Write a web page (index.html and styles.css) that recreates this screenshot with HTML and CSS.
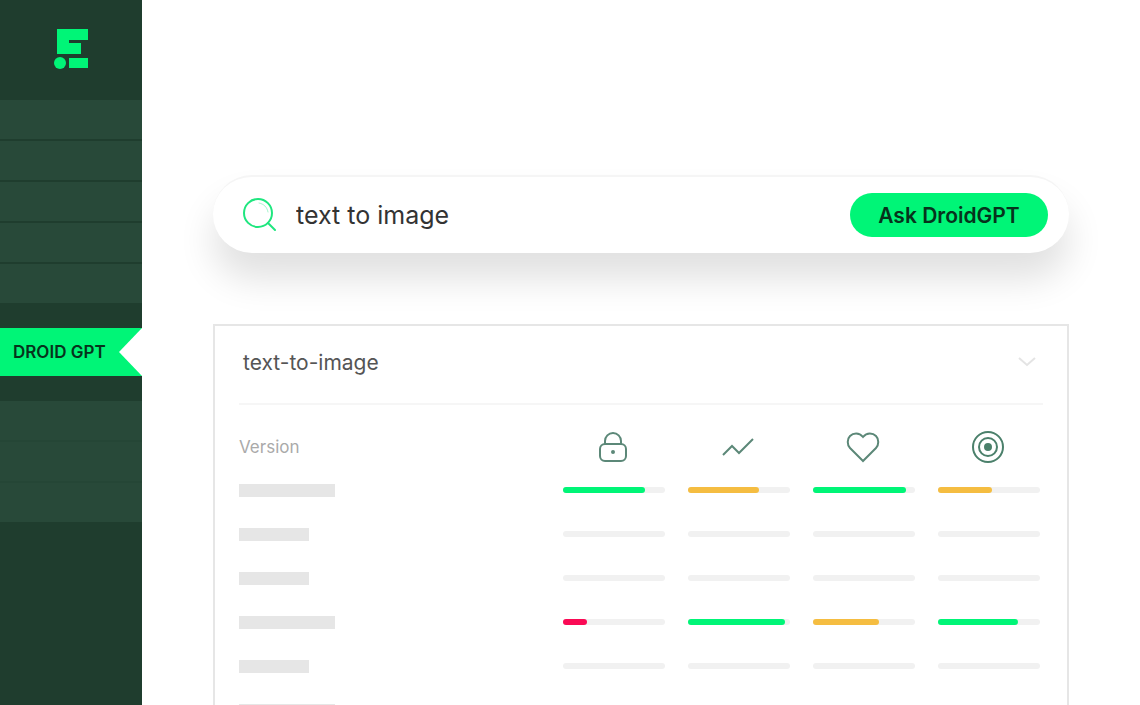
FILE: index.html
```html
<!DOCTYPE html>
<html lang="en">

<head>
  <meta charset="UTF-8">
  <meta name="viewport" content="width=device-width, initial-scale=1.0">
  <title>DroidGPT</title>
  <link rel="stylesheet" href="styles.css">
</head>

<body>
  <aside class="sidebar">
    <a class="logo" href="#" aria-label="Home">
      <svg width="36" height="42" viewBox="0 0 36 42" fill="currentColor" aria-hidden="true">
        <path d="M4 1h31v11H16v3h12v11H4z" />
        <circle cx="7" cy="35" r="6" />
        <path d="M16 30h19v10H16z" />
      </svg>
    </a>
    <nav class="nav">
      <ul class="nav-group">
        <li class="nav-item"></li>
        <li class="nav-item"></li>
        <li class="nav-item"></li>
        <li class="nav-item"></li>
        <li class="nav-item"></li>
      </ul>
      <a class="nav-active" href="#" aria-current="page">DROID GPT</a>
      <ul class="nav-group nav-group-soft">
        <li class="nav-item"></li>
        <li class="nav-item"></li>
        <li class="nav-item"></li>
      </ul>
    </nav>
  </aside>

  <main class="main">
    <form class="search">
      <svg class="search-icon" width="34" height="34" viewBox="0 0 34 34" fill="none" stroke="currentColor" stroke-width="2" stroke-linecap="round" aria-hidden="true">
        <circle cx="16" cy="15" r="14" />
        <path d="M26 25l7 7" />
        <path d="M17 5c5 1 8 4 9 9" stroke-width="1" opacity=".4" />
      </svg>
      <input class="search-input" type="text" value="text to image" aria-label="Search">
      <button class="search-button" type="button">Ask DroidGPT</button>
    </form>

    <section class="card">
      <header class="card-header">
        <h1 class="card-title">text-to-image</h1>
        <button class="card-toggle" type="button" aria-label="Collapse">
          <svg width="18" height="12" viewBox="0 0 18 12" fill="none" stroke="currentColor" stroke-width="2" aria-hidden="true">
            <path d="M1 2l8 7 8-7" />
          </svg>
        </button>
      </header>

      <table class="versions">
        <thead>
          <tr>
            <th class="version-head" scope="col">Version</th>
            <th class="metric" scope="col" aria-label="Security">
              <svg class="metric-icon" viewBox="0 0 36 36" aria-hidden="true">
                <rect x="5" y="15" width="26" height="17" rx="5" />
                <path d="M10 15v-3a8 8 0 0 1 16 0v3" />
                <circle cx="18" cy="23" r="1" />
              </svg>
            </th>
            <th class="metric" scope="col" aria-label="Trend">
              <svg class="metric-icon" viewBox="0 0 36 36" aria-hidden="true">
                <path d="M3 26l9-9 7 7L33 10" />
              </svg>
            </th>
            <th class="metric" scope="col" aria-label="Popularity">
              <svg class="metric-icon" viewBox="0 0 36 36" aria-hidden="true">
                <path d="M18 32L5 19C2 16 2 10 5 7c3-3 9-4 13 1 4-5 10-4 13-1 3 3 3 9 0 12z" />
              </svg>
            </th>
            <th class="metric" scope="col" aria-label="Accuracy">
              <svg class="metric-icon metric-icon-target" viewBox="0 0 36 36" aria-hidden="true">
                <circle cx="18" cy="18" r="15" />
                <circle cx="18" cy="18" r="9" />
                <circle class="dot" cx="18" cy="18" r="3" />
              </svg>
            </th>
          </tr>
        </thead>
        <tbody>
          <tr>
            <td><div class="label label-long"></div></td>
            <td><div class="bar"><div class="fill good" style="width: 80%"></div></div></td>
            <td><div class="bar"><div class="fill fair" style="width: 70%"></div></div></td>
            <td><div class="bar"><div class="fill good" style="width: 91%"></div></div></td>
            <td><div class="bar"><div class="fill fair" style="width: 53%"></div></div></td>
          </tr>
          <tr>
            <td><div class="label"></div></td>
            <td><div class="bar"></div></td>
            <td><div class="bar"></div></td>
            <td><div class="bar"></div></td>
            <td><div class="bar"></div></td>
          </tr>
          <tr>
            <td><div class="label"></div></td>
            <td><div class="bar"></div></td>
            <td><div class="bar"></div></td>
            <td><div class="bar"></div></td>
            <td><div class="bar"></div></td>
          </tr>
          <tr>
            <td><div class="label label-long"></div></td>
            <td><div class="bar"><div class="fill poor" style="width: 24%"></div></div></td>
            <td><div class="bar"><div class="fill good" style="width: 95%"></div></div></td>
            <td><div class="bar"><div class="fill fair" style="width: 65%"></div></div></td>
            <td><div class="bar"><div class="fill good" style="width: 78%"></div></div></td>
          </tr>
          <tr>
            <td><div class="label"></div></td>
            <td><div class="bar"></div></td>
            <td><div class="bar"></div></td>
            <td><div class="bar"></div></td>
            <td><div class="bar"></div></td>
          </tr>
          <tr>
            <td><div class="label label-long"></div></td>
            <td><div class="bar"></div></td>
            <td><div class="bar"></div></td>
            <td><div class="bar"></div></td>
            <td><div class="bar"></div></td>
          </tr>
        </tbody>
      </table>
    </section>
  </main>
</body>

</html>
```
FILE: styles.css
```css
*,
*::after,
*::before {
  box-sizing: border-box;
}

body {
  margin: 0;
  height: 100vh;
  display: flex;
  overflow: hidden;
  background-color: #fff;
  font-family: Inter, "Liberation Sans", sans-serif;
}

button,
input {
  font-family: inherit;
  border: 0;
  padding: 0;
  background: none;
}

/* Sidebar */
.sidebar {
  flex: 0 0 142px;
  background-color: #1f3d2e;
}

.logo {
  display: flex;
  justify-content: center;
  height: 100px;
  padding-top: 28px;
  color: #00f577;
}

.nav {
  display: flex;
  flex-direction: column;
  gap: 25px;
}

.nav-group {
  list-style: none;
  margin: 0;
  padding: 0;
  display: flex;
  flex-direction: column;
  gap: 2px;
}

.nav-item {
  height: 39px;
  background-color: #284939;
}

.nav-group-soft {
  background-color: #254636;
}

.nav-active {
  display: flex;
  align-items: center;
  justify-content: space-between;
  height: 48px;
  padding-left: 13px;
  background-color: #00f577;
  color: #06331c;
  font-size: 17px;
  font-weight: 600;
  text-decoration: none;
  white-space: nowrap;
}

/* notch that points into the sidebar */
.nav-active::after {
  content: "";
  width: 23px;
  height: 100%;
  background-color: #fff;
  clip-path: polygon(100% 0, 100% 100%, 0 50%);
}

/* Main */
.main {
  flex: 1;
  min-width: 0;
  padding: 175px 71px 0;
}

.search {
  display: flex;
  align-items: center;
  height: 78px;
  padding: 0 21px 0 29px;
  margin-bottom: 71px;
  border-top: 2px solid #f5f5f5;
  border-radius: 39px;
  background-color: #fff;
  box-shadow: 0 26px 36px rgba(0, 0, 0, 0.12);
}

.search-icon {
  flex: none;
  color: #1fe67f;
}

.search-input {
  flex: 1;
  min-width: 0;
  margin-left: 20px;
  color: #333;
  font-size: 25px;
  outline: none;
}

.search-button {
  width: 198px;
  height: 44px;
  border-radius: 22px;
  background-color: #00f577;
  color: #06331c;
  font-size: 21px;
  font-weight: 600;
}

.card {
  border: 2px solid #e6e6e6;
  padding: 0 4px 24px 24px;
  background-color: #fff;
}

.card-header {
  display: flex;
  align-items: center;
  justify-content: space-between;
  height: 79px;
  margin-right: 20px;
  padding: 0 7px 5px 4px;
  border-bottom: 2px solid #f6f6f6;
}

.card-title {
  margin: 0;
  color: #555;
  font-size: 21px;
  font-weight: 400;
}

.card-toggle {
  display: flex;
  color: #e4e4e4;
}

/* Versions table */
.versions {
  width: 100%;
  margin-top: 20px;
  border-collapse: collapse;
  table-layout: fixed;
}

.versions th {
  height: 43px;
  padding: 0;
}

.versions td {
  height: 44px;
  padding: 0;
}

.version-head {
  text-align: left;
  color: #aaa;
  font-size: 17px;
  font-weight: 400;
}

.metric {
  width: 125px;
}

.metric-icon {
  display: block;
  width: 36px;
  height: 36px;
  margin-left: 32px;
  fill: none;
  stroke: #5c8878;
  stroke-width: 2;
}

.metric-icon-target {
  stroke: #4b806b;
}

.dot {
  fill: #4b806b;
}

.label {
  width: 70px;
  height: 13px;
  background-color: #e6e6e6;
}

.label-long {
  width: 96px;
}

.bar {
  width: 102px;
  height: 6px;
  border-radius: 3px;
  background-color: #f1f1f1;
}

.fill {
  height: 100%;
  border-radius: 3px;
}

.good {
  background-color: #00f577;
}

.fair {
  background-color: #f5bd41;
}

.poor {
  background-color: #fa0a55;
}
```
